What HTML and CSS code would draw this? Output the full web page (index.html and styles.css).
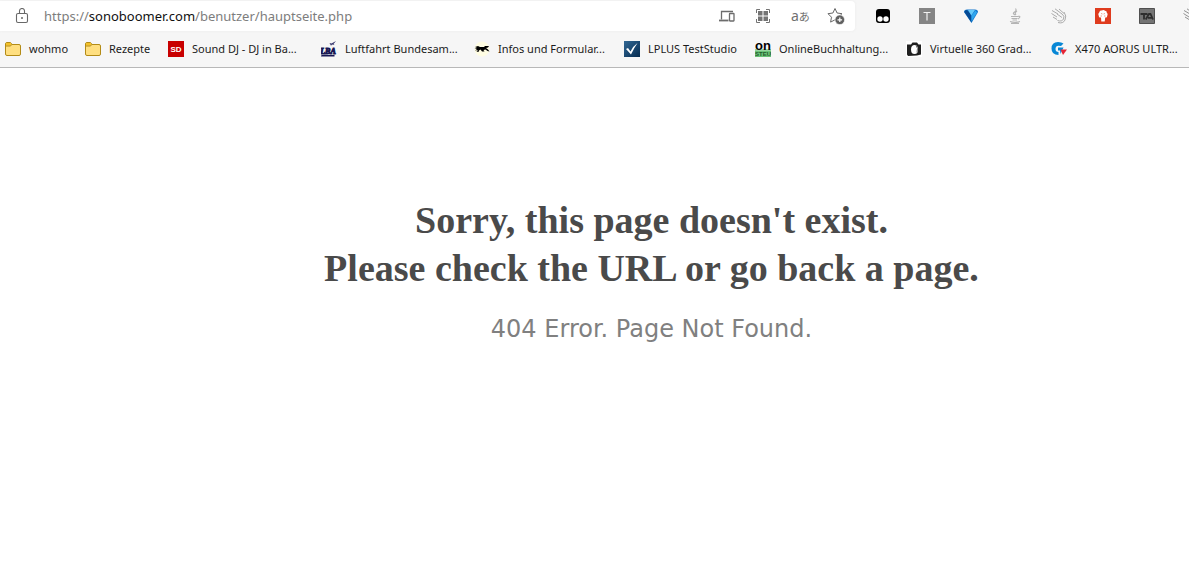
FILE: index.html
```html
<!DOCTYPE html>
<html lang="en">
<head>
<meta charset="utf-8">
<meta name="viewport" content="width=device-width, initial-scale=1">
<title>404 Error</title>
<link rel="stylesheet" href="styles.css">
</head>
<body>
<header class="browser">
  <div class="toolbar">
    <div class="address">
      <button class="icon-button" aria-label="Site information">
        <svg class="icon" viewBox="0 0 16 16" fill="none" stroke="#686868" stroke-width="1.1"><rect x="2.5" y="5.5" width="11" height="9" rx="1.5"/><path d="M5.5 5.500V3a2.500 2.500 0 0 1 5 0v2.500"/><circle cx="8" cy="10" r="1" fill="#686868" stroke="none"/></svg>
      </button>
      <div class="url" role="textbox" aria-label="Address" contenteditable="true" spellcheck="false">https://<span class="host">sonoboomer.com</span>/benutzer/hauptseite.php</div>
      <div class="actions">
        <button class="icon-button" aria-label="Devices">
          <svg class="icon" viewBox="0 0 16 16" fill="none" stroke="#6c6c6c"><path d="M14 3.500H2.500v8" stroke-width="1.300"/><path d="M0 12.500h9.500" stroke-width="1.800"/><rect x="10.500" y="5.500" width="4.500" height="7.500" rx=".5" stroke-width="1.300"/></svg>
        </button>
        <button class="icon-button" aria-label="Apps">
          <svg class="icon" viewBox="0 0 16 16"><path d="M3 3h4.500v4.500H3zM8.500 3H13v4.500H8.500zM3 8.500h4.500V13H3zM8.500 8.500H13V13H8.500z" fill="#747474"/><path d="M1.500 5V1.500H5M11 1.500h3.500V5M14.500 11v3.500H11M5 14.500H1.500V11" fill="none" stroke="#747474"/></svg>
        </button>
        <button class="icon-button translate" aria-label="Translate">a<span class="kana">あ</span></button>
        <button class="icon-button" aria-label="Add to favourites">
          <svg class="icon star" viewBox="0 0 18 18"><path d="M8 1.500l2.100 4.500 4.900.7-3.600 3.500.9 4.900L8 12.800l-4.400 2.300.9-4.900L1 6.700 5.900 6z" fill="none" stroke="#686868"/><circle cx="12.800" cy="12.800" r="4.800" fill="#606060" stroke="#fff" stroke-width=".6"/><path d="M12.800 10.500v4.600M10.500 12.800h4.600" stroke="#fff" stroke-width="1.200"/></svg>
        </button>
      </div>
    </div>
    <div class="extensions">
      <button class="icon-button" aria-label="Userscripts"><svg class="icon" viewBox="0 0 16 16"><rect x="1" y="1" width="14" height="14" rx="3"/><circle cx="5" cy="11" r="2.700" fill="#fff"/><circle cx="11" cy="11" r="2.700" fill="#fff"/></svg></button>
      <button class="icon-button" aria-label="T"><svg class="icon" viewBox="0 0 16 16"><path d="M0 0h16v16H0z" fill="#858585"/><path d="M4.500 4.500h7M8 4.500V12.500" stroke="#f2f2f2" stroke-width="1.200" fill="none"/></svg></button>
      <button class="icon-button" aria-label="Gem"><svg class="icon" viewBox="0 0 16 16"><path d="M1 4q0-2.500 3-2.500h8q3 0 3 2.500L8.500 15z" fill="#1477cc"/><path d="M1.300 4Q2 2 4 2l4.200 4.500.3 8z" fill="#054a94"/><path d="M5 2h7L8.300 7.500z" fill="#65c9fa"/><path d="M8.500 7.500l4-5 1.500 2-5.500 9z" fill="#2ea6ee"/></svg></button>
      <button class="icon-button" aria-label="Java"><svg class="icon" viewBox="0 0 16 16" fill="none" stroke="#b4b4b4" stroke-width="1.200"><path d="M8.500 0.500q1.500 2-1 3.500t.5 3M10 3q-3 2-1 4M4 8.500h7.500M4.500 10.500h6M5.500 12h4.500M11.500 8q3 .5-.5 3M3 13.500q5 1.500 10 0M4 15.300h8"/></svg></button>
      <button class="icon-button" aria-label="Hand"><svg class="icon" viewBox="0 0 16 16" fill="none" stroke="#ababab"><path d="M1 2.500l6 3.500M4 .8L11 6M8 1l5 4.500M.5 5.500L6 9M2 9l4 2.500M11 6q3 2 1.500 5t-6 1.500M6 6l5 3.500M13 4q3 4 1 8T7 14.500"/></svg></button>
      <button class="icon-button" aria-label="Brain"><svg class="icon" viewBox="0 0 16 16"><path d="M0 0h16v16H0z" fill="#df3b1e"/><path d="M4.500 4q0-2 2.200-1.500 2-1.300 3.300.2 2 0 1.700 1.900Q13.400 6 12.200 8q0 2-2 1.500l-.5 4H6.300L6 9.500Q3.700 10 3.800 8 2.400 6 4.500 4z" fill="#fff"/><path d="M6 5.500l1.500.5M10 5.500L8.500 6M5.500 8H7M9 8h1.500" stroke="#e98a74" stroke-width=".8" fill="none"/></svg></button>
      <button class="icon-button" aria-label="TA"><svg class="icon" viewBox="0 0 16 16"><path d="M.5.500h15v15H.5z" fill="#747474" stroke="#505050"/><path d="M1.500 6h7M5 6v5.500M6.700 11.500L10 6h1.500l2.500 5.500M9 9.800h4" fill="none" stroke="#2d2d2d" stroke-width="1.800"/></svg></button>
      <button class="icon-button" aria-label="Hand, second profile"><svg class="icon" viewBox="0 0 16 16" fill="none" stroke="#909090"><path d="M1 2.500l6 3.500M4 .8L11 6M8 1l5 4.500M.5 5.500L6 9M2 9l4 2.500M11 6q3 2 1.500 5t-6 1.500"/></svg></button>
    </div>
  </div>
  <nav class="bookmarks" aria-label="Favourites">
    <a class="bookmark" href="#"><svg class="icon" viewBox="0 0 16 16"><path d="M.5 3Q.5 1.500 2 1.500h3.500L7 3.500h7q1.500 0 1.500 1.500v8q0 1.500-1.500 1.500H2Q.5 14.500.5 13z" fill="#ffdf80" stroke="#b38b17"/><path d="M1 4.500V3q0-1 1-1h3.300l1.200 1.500-1.300 1.300z" fill="#f4c126"/><path d="M.5 5h4.700L7 3.500" fill="none" stroke="#b38b17"/></svg><span>wohmo</span></a>
    <a class="bookmark" href="#"><svg class="icon" viewBox="0 0 16 16"><path d="M.5 3Q.5 1.500 2 1.500h3.500L7 3.500h7q1.500 0 1.500 1.500v8q0 1.500-1.500 1.500H2Q.5 14.500.5 13z" fill="#ffdf80" stroke="#b38b17"/><path d="M1 4.500V3q0-1 1-1h3.300l1.200 1.500-1.300 1.300z" fill="#f4c126"/><path d="M.5 5h4.700L7 3.500" fill="none" stroke="#b38b17"/></svg><span>Rezepte</span></a>
    <a class="bookmark" href="#"><svg class="icon" viewBox="0 0 16 16"><path d="M0 0h16v16H0z" fill="#c80000"/><text class="mark sd" x="8" y="11" text-anchor="middle">SD</text></svg><span>Sound DJ - DJ in Ba...</span></a>
    <a class="bookmark" href="#"><svg class="icon" viewBox="0 0 16 16"><path d="M.5 14h13v1.500H0z" fill="#171754"/><path d="M8.500 2l2 .5L15 0l-2.500 3 1 1-2.500-.5-1 1.200z" fill="#35356c"/><text class="mark lba" x="7" y="13" text-anchor="middle">LBA</text></svg><span>Luftfahrt Bundesam...</span></a>
    <a class="bookmark" href="#"><svg class="icon" viewBox="0 0 16 16"><circle cx="8" cy="8" r="7.500" fill="#fffde3"/><path d="M1 6l3-1 2 1h4l1-1 4 0-1 1.500-2 .5 2 1.500 1.500 2-2-.5-2-1.500-2 .5 1 1.500H8L6.500 8.500 5 9.500l-.5 1.500-2-.5L4 9l-3 .5L3 8 .5 7.500 3 7z"/></svg><span>Infos und Formular...</span></a>
    <a class="bookmark" href="#"><svg class="icon" viewBox="0 0 16 16"><defs><linearGradient id="check-blue" x1="0" y1="0" x2="1" y2="1"><stop stop-color="#326894"/><stop offset="1" stop-color="#052b50"/></linearGradient></defs><path d="M0 0h16v16H0z" fill="url(#check-blue)"/><path d="M2 8l2-1 2.500 3.500Q9 5 13.500 2 10 7 7 13.500z" fill="#fff"/></svg><span>LPLUS TestStudio</span></a>
    <a class="bookmark" href="#"><svg class="icon" viewBox="0 0 16 16"><path d="M0 8h16v8H0z" fill="#6bc276"/><path d="M0 8h16v2H0z" fill="#98d4a0"/><text class="mark on" x="8" y="9" text-anchor="middle">on</text><text class="mark steu" x="8" y="15" text-anchor="middle">STEU</text></svg><span>OnlineBuchhaltung...</span></a>
    <a class="bookmark" href="#"><svg class="icon" viewBox="0 0 16 16"><path d="M0 0h16v16H0z" fill="#fff"/><path d="M1 3.500h4L6.500 1.500h4.500l1.500 2H15v10l-4 1-9 .5-1-1.500z" fill="#202020"/><ellipse cx="8.500" cy="8.500" rx="3.500" ry="4.500" fill="#fff"/><path d="M10 4.500q2.500 2.500 1 7" fill="none" stroke="#777"/></svg><span>Virtuelle 360 Grad...</span></a>
    <a class="bookmark" href="#"><svg class="icon" viewBox="0 0 16 16"><path d="M12.500 2.500L10 5Q4.500 3.500 4.500 8q0 3 3 3v3Q.5 14 .5 7.500.5 1 7 1q3.500 0 5.500 1.500z" fill="#0787d5"/><path d="M7 6.500h5.500l-3 6.500-.5-3.500H7z" fill="#0787d5"/><path d="M9.500 8.500H16L12 14z" fill="#e62535"/></svg><span>X470 AORUS ULTR...</span></a>
  </nav>
</header>
<main class="error">
  <h1 class="title">Sorry, this page doesn't exist.<br>Please check the URL or go back a page.</h1>
  <p class="detail">404 Error. Page Not Found.</p>
</main>
</body>
</html>
```
FILE: styles.css
```css
* {
  box-sizing: border-box;
}

body {
  margin: 0;
  background: #fff;
  font-family: "Noto Sans", "Open Sans", sans-serif;
}

.browser {
  overflow: hidden;
  background: #f6f6f6;
  border-bottom: 1px solid #b8b8b8;
}

.toolbar {
  display: flex;
  padding-top: 1px;
}

.address {
  flex: 1;
  min-width: 0;
  display: flex;
  align-items: center;
  height: 30px;
  padding: 0 10px 0 14px;
  background: #fff;
  border-radius: 0 4px 4px 0;
  box-shadow: 0 0 3px #eaeaea;
}

.icon-button {
  flex: none;
  display: flex;
  align-items: center;
  justify-content: flex-start;
  padding: 0;
  border: 0;
  background: none;
}

.icon {
  display: block;
  flex: none;
  width: 16px;
  height: 16px;
}

.star {
  width: 18px;
  height: 18px;
}

.url {
  flex: 1;
  margin-left: 14px;
  overflow: hidden;
  white-space: nowrap;
  font-size: 13px;
  line-height: 20px;
  color: #7d7d7d;
  outline: 0;
}

.host {
  color: #111;
}

.actions {
  display: grid;
  grid-template-columns: repeat(4, 18px);
  align-items: center;
  gap: 18px;
}

.translate {
  font-family: "Noto Sans", sans-serif;
  font-size: 14px;
  line-height: 16px;
  color: #707070;
}

.kana {
  font-family: "Noto Sans CJK JP", sans-serif;
  font-size: 11px;
}

.extensions {
  flex: 0 0 334px;
  display: flex;
  gap: 28px;
  padding-left: 20px;
  overflow: hidden;
}

.bookmarks {
  display: grid;
  grid-template-columns: 80px 83px 153px 153px 150px 131px 151px 145px auto;
  padding: 8px 5px;
}

.bookmark {
  display: flex;
  align-items: center;
  gap: 8px;
  font-size: 11px;
  line-height: 20px;
  color: #1b1b1b;
  white-space: nowrap;
  text-decoration: none;
}

.mark {
  font-family: "Liberation Sans", sans-serif;
  font-weight: bold;
}

.sd {
  font-size: 8px;
  fill: #fff;
}

.lba {
  font-family: "Liberation Serif", serif;
  font-size: 8px;
  font-style: italic;
  fill: #171754;
  stroke: #171754;
  stroke-width: 1px;
}

.on {
  font-size: 13px;
}

.steu {
  font-size: 6px;
  fill: #245a2d;
}

.error {
  padding: 128px 0 32px 114px;
  text-align: center;
}

.title {
  margin: 0;
  font-family: Georgia, "Liberation Serif", serif;
  font-size: 38px;
  font-weight: bold;
  line-height: 48px;
  color: #4a4a4a;
}

.detail {
  margin: 21px 0 0;
  font-family: "DejaVu Sans", sans-serif;
  font-size: 24px;
  line-height: 32px;
  color: #808080;
}
```
